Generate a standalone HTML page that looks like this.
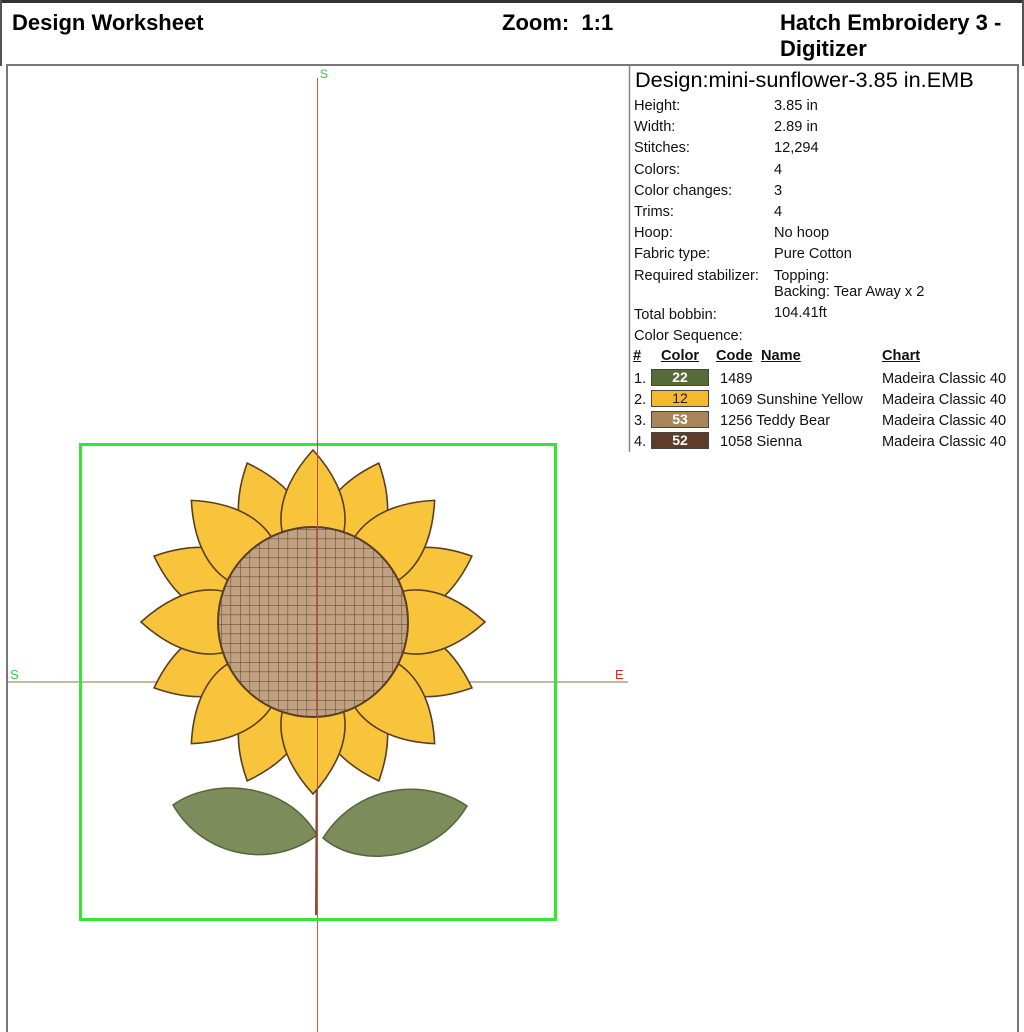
<!DOCTYPE html>
<html><head><meta charset="utf-8"><style>
body{margin:0;background:#fff;width:1024px;height:1032px;overflow:hidden;font-family:"Liberation Sans",Arial,sans-serif;position:relative}
.a{position:absolute;white-space:nowrap}
.h{font-weight:bold;font-size:22px;color:#000}
.t{font-size:14.6px;color:#111}
.u{text-decoration:underline;font-weight:bold}
.sw{position:absolute;width:58px;height:17px;border:1px solid #444;box-sizing:border-box;text-align:center;font-size:14px;line-height:15px;color:#fff;font-weight:bold}
</style></head><body>
<div style="position:absolute;left:0;top:0;width:1024px;height:3px;background:#333"></div>
<div style="position:absolute;left:0;top:0;width:2px;height:66px;background:#555"></div>
<div style="position:absolute;right:0;top:0;width:2px;height:66px;background:#555"></div>
<div class="a h" style="left:12px;top:10px">Design Worksheet</div>
<div class="a h" style="left:502px;top:10px">Zoom:&nbsp; 1:1</div>
<div class="a h" style="left:780px;top:10px;line-height:26px">Hatch Embroidery 3 -<br>Digitizer</div>

<svg class="a" style="left:0;top:0" width="1024" height="1032">
<defs>
<pattern id="g" width="9.5" height="9.5" patternUnits="userSpaceOnUse" x="3" y="2">
<rect width="9.5" height="9.5" fill="#c0a282"/><path d="M0 0H9.5M0 0V9.5" stroke="#6e4e34" stroke-width="1.2"/>
</pattern>
<path id="p" d="M0,-172 C20,-150 33,-125 32,-100 C31,-78 20,-64 0,-58 C-20,-64 -31,-78 -32,-100 C-33,-125 -20,-150 0,-172Z" fill="#f7c43c" stroke="#5a3e22" stroke-width="1.6"/>
</defs>
<rect x="7" y="65" width="1011" height="980" fill="none" stroke="#777" stroke-width="2"/>
<line x1="629.5" y1="66" x2="629.5" y2="452" stroke="#888" stroke-width="1.5"/>
<rect x="317" y="78" width="1" height="954" fill="#d05a48"/>
<line x1="8" y1="682" x2="628" y2="682" stroke="#b0a080" stroke-width="1.5"/>
<text x="320" y="78" font-size="12" fill="#3c3" font-family="Liberation Sans">S</text>
<text x="10" y="679" font-size="13" fill="#3c3" font-family="Liberation Sans">S</text>
<text x="615" y="679" font-size="13" fill="#d22" font-family="Liberation Sans">E</text>
<rect x="80.5" y="444.5" width="475" height="475" fill="none" stroke="#33e633" stroke-width="3"/>
<path d="M173,805 C210,778 285,780 317,835 C275,868 205,860 173,805Z" fill="#7c8c5a" stroke="#56663c" stroke-width="1.5"/>
<path d="M323,838 C360,780 430,780 467,806 C435,860 360,870 323,838Z" fill="#7c8c5a" stroke="#56663c" stroke-width="1.5"/>
<line x1="317" y1="720" x2="316" y2="915" stroke="#8a4a3a" stroke-width="2"/>
<g transform="translate(313,622)">
<use href="#p" transform="rotate(22.5)"/><use href="#p" transform="rotate(67.5)"/><use href="#p" transform="rotate(112.5)"/><use href="#p" transform="rotate(157.5)"/><use href="#p" transform="rotate(202.5)"/><use href="#p" transform="rotate(247.5)"/><use href="#p" transform="rotate(292.5)"/><use href="#p" transform="rotate(337.5)"/>
<use href="#p" transform="rotate(0)"/><use href="#p" transform="rotate(45)"/><use href="#p" transform="rotate(90)"/><use href="#p" transform="rotate(135)"/><use href="#p" transform="rotate(180)"/><use href="#p" transform="rotate(225)"/><use href="#p" transform="rotate(270)"/><use href="#p" transform="rotate(315)"/>
<circle r="95" fill="url(#g)" stroke="#5a3e22" stroke-width="2"/>
</g>
<rect x="317" y="440" width="1" height="350" fill="#c04a3a"/>
</svg>

<div class="a" style="left:635px;top:67px;font-size:21.7px">Design:mini-sunflower-3.85 in.EMB</div>
<div class="a t" style="left:634px;top:96px;line-height:21.2px">Height:<br>Width:<br>Stitches:<br>Colors:<br>Color changes:<br>Trims:<br>Hoop:<br>Fabric type:<br>Required stabilizer:</div>
<div class="a t" style="left:774px;top:96px;line-height:21.2px">3.85 in<br>2.89 in<br>12,294<br>4<br>3<br>4<br>No hoop<br>Pure Cotton<br>Topping:</div>
<div class="a t" style="left:774px;top:284px">Backing: Tear Away x 2</div>
<div class="a t" style="left:634px;top:305px;line-height:21.2px">Total bobbin:<br>Color Sequence:</div>
<div class="a t" style="left:774px;top:305px">104.41ft</div>
<div class="a t u" style="left:633px;top:348px">#</div>
<div class="a t u" style="left:661px;top:348px">Color</div>
<div class="a t u" style="left:716px;top:348px">Code</div>
<div class="a t u" style="left:761px;top:348px">Name</div>
<div class="a t u" style="left:882px;top:348px">Chart</div>
<div class="a t" style="left:634px;top:369px;line-height:21px">1.<br>2.<br>3.<br>4.</div>
<div class="sw" style="left:651px;top:369px;background:#566b35">22</div>
<div class="sw" style="left:651px;top:390px;background:#f6b92e;color:#222;font-weight:normal">12</div>
<div class="sw" style="left:651px;top:411px;background:#a98459">53</div>
<div class="sw" style="left:651px;top:432px;background:#5e3c2a">52</div>
<div class="a t" style="left:720px;top:369px;line-height:21px">1489<br>1069 Sunshine Yellow<br>1256 Teddy Bear<br>1058 Sienna</div>
<div class="a t" style="left:882px;top:369px;line-height:21px">Madeira Classic 40<br>Madeira Classic 40<br>Madeira Classic 40<br>Madeira Classic 40</div>
</body></html>
